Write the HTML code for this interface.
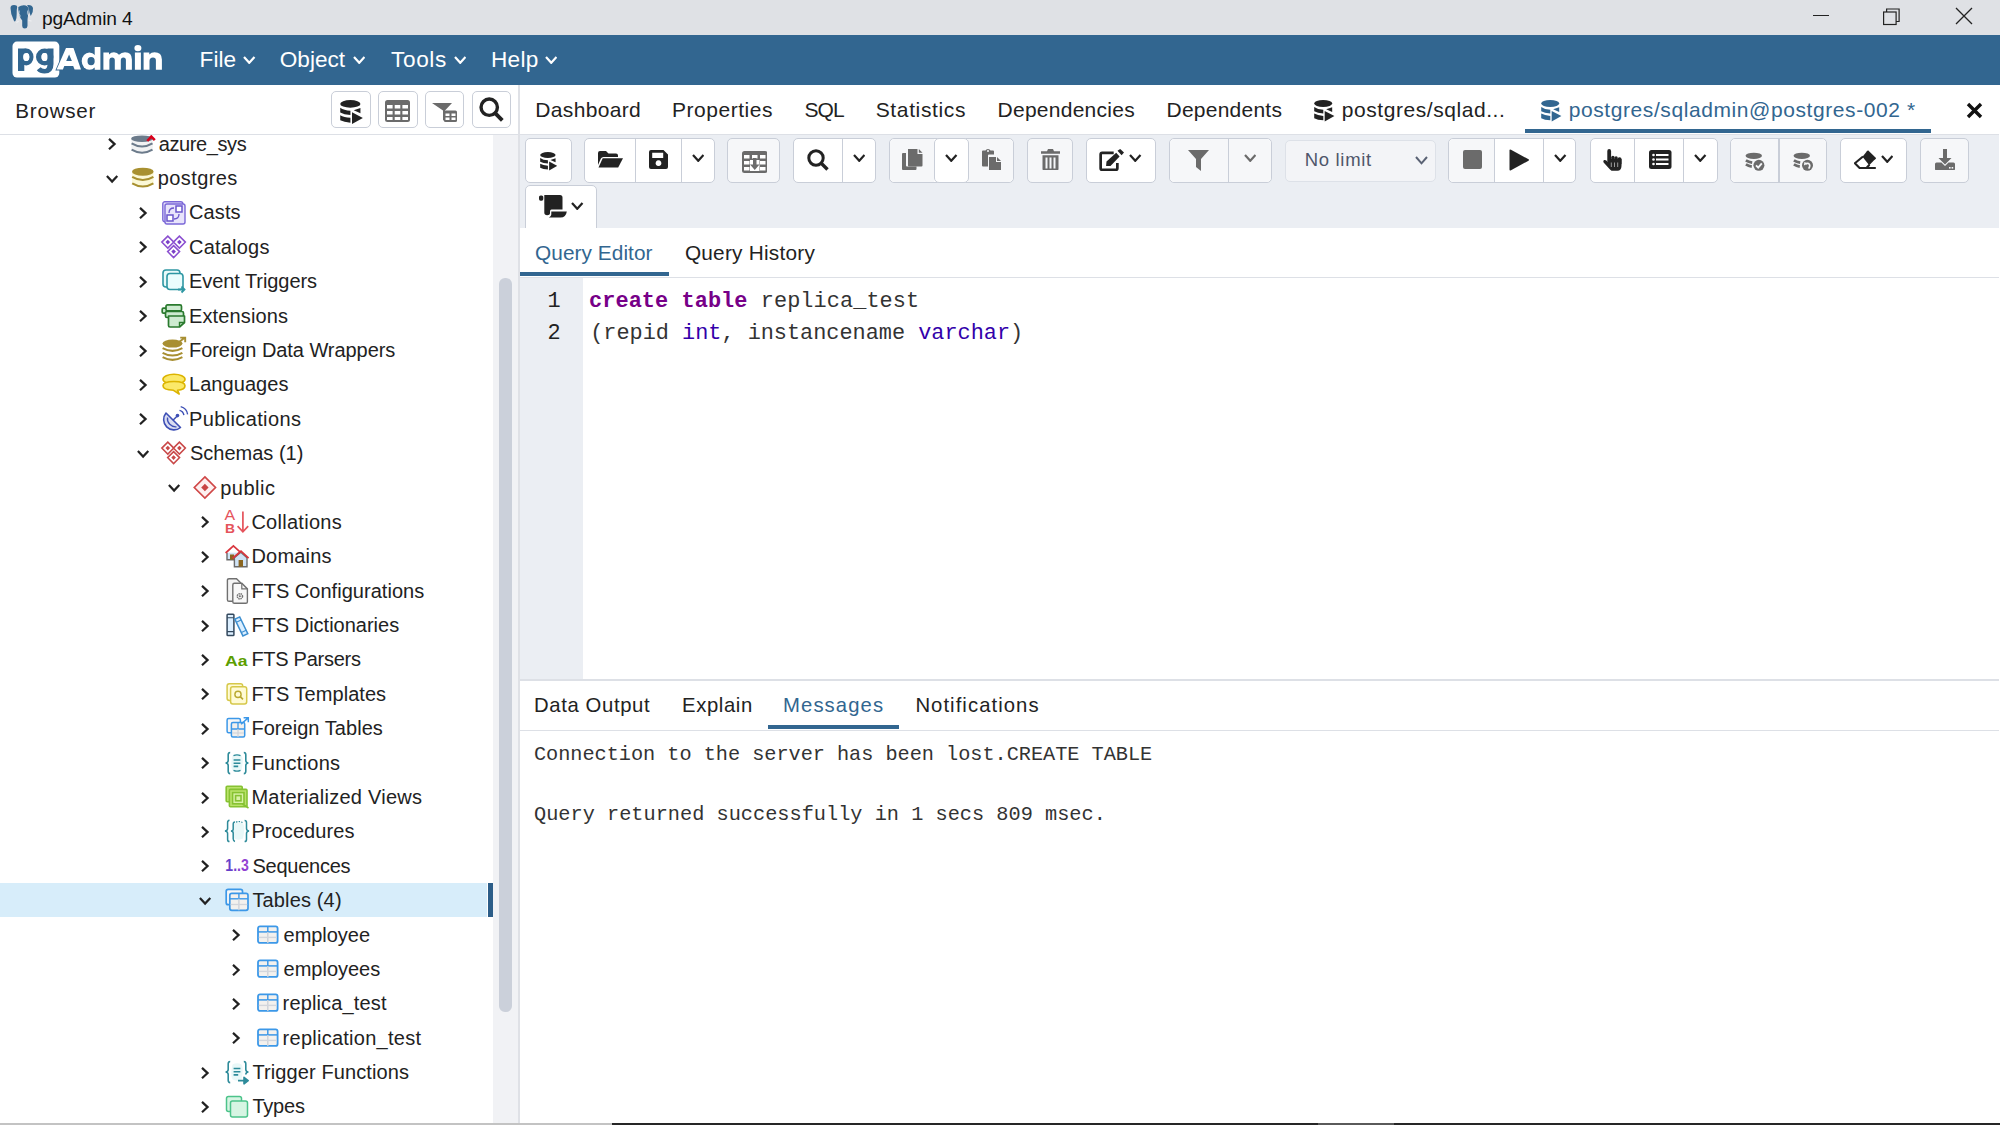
<!DOCTYPE html>
<html><head><meta charset="utf-8"><style>
*{margin:0;padding:0;box-sizing:border-box}
html,body{width:2000px;height:1125px;overflow:hidden;background:#fff;font-family:"Liberation Sans",sans-serif;color:#222}
.abs{position:absolute}
.tt{position:absolute;font-size:20px;line-height:34.386px;height:34.386px;white-space:nowrap;color:#222}
.menu{top:35px;height:50px;line-height:51px;font-size:22.5px;color:#fff;white-space:nowrap}
.btn{border:1.4px solid #c9ced8;border-radius:5px}
.tab{top:85px;height:49px;line-height:50px;font-size:21.2px;color:#222;white-space:nowrap}
.tab2{height:46px;line-height:46px;font-size:21px;color:#222;white-space:nowrap}
.code{font-family:"Liberation Mono",monospace;font-size:21.9px;line-height:32px;color:#222;white-space:pre}
.kw{color:#770088;font-weight:bold}
.ty{color:#3300aa}
.msg{font-family:"Liberation Mono",monospace;font-size:20.25px;line-height:30px;color:#222;white-space:pre}
</style></head><body>
<div class="abs" style="left:0;top:0;width:2000px;height:35px;background:#dfe1e5"></div>
<svg class="abs" style="left:10px;top:4px" width="24" height="25" viewBox="0 0 24 25"><path fill="#336791" d="M0.5 4 Q0.5 1 4 1 Q7.2 1 7.2 3 Q6.5 6 6.7 10 Q6.8 14 5.5 17 Q4.5 18 3.8 16.5 Q0.5 10 0.5 4z"/><path fill="#336791" d="M8.3 3 Q11 1.2 14 1.3 Q17.8 1.5 18.6 4.5 Q18.8 8 18 12 Q17.6 14 17.5 16 V22 Q17.3 24.5 14.8 24.5 Q12.3 24.5 12.2 22 V16.5 Q10 14 9 10 Q8 6 8.3 3z"/><path fill="#336791" d="M17 1.2 Q22 0.5 23 4 Q23.5 8 20.8 12 Q19.3 9 19 6 Q18.8 3 17 1.2z"/><path d="M9.3 6.5 Q8.3 9.5 10.5 12.5 M17.7 6.5 Q16.6 9.5 18.6 11.8 M8.5 17 Q7.8 18.3 6.5 18.6 M18.5 16.3 Q20 17 21.5 17" stroke="#fff" stroke-width="0.7" fill="none" opacity="0.8"/></svg>
<div class="abs" style="left:42.00px;top:3.85px;font-family:'Liberation Sans';font-size:19.2px;line-height:29px;font-weight:400;letter-spacing:-0.132px;color:#111;white-space:pre;">pgAdmin 4</div>
<div class="abs" style="left:1813px;top:14.5px;width:16px;height:1.3px;background:#222"></div>
<svg class="abs" style="left:1883px;top:8px" width="18" height="18" viewBox="0 0 18 18" preserveAspectRatio="none"><rect x="0.6" y="4" width="12.5" height="12.5" fill="none" stroke="#222" stroke-width="1.2"/><path d="M3.6 4 v-3 h12.5 v12.5 h-3" fill="none" stroke="#222" stroke-width="1.2"/></svg>
<svg class="abs" style="left:1955px;top:7px" width="18" height="18" viewBox="0 0 18 18" preserveAspectRatio="none"><path d="M1 1 L17 17 M17 1 L1 17" stroke="#222" stroke-width="1.3"/></svg>
<div class="abs" style="left:0;top:35px;width:2000px;height:50px;background:#326690"></div>
<svg class="abs" style="left:0;top:0" width="170" height="85" viewBox="0 0 170 85"><rect x="12.5" y="41.6" width="46.8" height="36" rx="4.5" fill="#fff"/><path fill="#326690" d="M18 48.5 H26.2 V57 H18z M18 48.5 h6.3 v22.5 h-6.3z"/><path fill="#326690" fill-rule="evenodd" d="M18.90 57.00 a7.3 8.5 0 1 0 14.60 0 a7.3 8.5 0 1 0 -14.60 0z M23.10 57.00 a3.1 4 0 1 0 6.20 0 a3.1 4 0 1 0 -6.20 0z"/><path fill="#fff" d="M23.10 57.00 a3.1 4 0 1 0 6.20 0 a3.1 4 0 1 0 -6.20 0z"/><path fill="#326690" fill-rule="evenodd" d="M36.00 57.00 a8.7 8.5 0 1 0 17.40 0 a8.7 8.5 0 1 0 -17.40 0z M41.50 57.00 a3.1 4 0 1 0 6.20 0 a3.1 4 0 1 0 -6.20 0z"/><path fill="#fff" d="M41.50 57.00 a3.1 4 0 1 0 6.20 0 a3.1 4 0 1 0 -6.20 0z"/><path fill="#326690" d="M47.5 48.5 H53.5 V64 Q53.5 73.5 44.5 73.5 Q39.5 73.5 36.8 70.2 L40.6 67.3 Q42 69 44.5 69 Q47.5 69 47.5 64z"/><path fill="#fff" stroke="#326690" stroke-width="1.6" paint-order="stroke" fill-rule="evenodd" d="M56.6 69.6 L66 47.9 H73.5 L81 69.6 H74.6 L73.2 65.9 H64.3 L62.9 69.6z M66.2 61.1 H71.9 L69.1 54.6z"/><path fill="#fff" d="M81.70 61.10 a7.7 8.7 0 1 0 15.40 0 a7.7 8.7 0 1 0 -15.40 0z"/><path fill="#fff" d="M94.7 47 H100.4 V69.8 H94.7z"/><path fill="#326690" d="M87.50 61.20 a3.6 4.1 0 1 0 7.20 0 a3.6 4.1 0 1 0 -7.20 0z"/><path fill="#fff" d="M103.4 69.8 V52.6 H109 V54.5 Q111 52.2 114 52.2 Q117.3 52.2 119 54.8 Q121.3 52.2 125 52.2 Q131.9 52.2 131.9 59.5 V69.8 H125.9 V60 Q125.9 57.5 123.4 57.5 Q120.8 57.5 120.8 60.5 V69.8 H114.8 V60 Q114.8 57.5 112.1 57.5 Q109.4 57.5 109.4 60.5 V69.8z"/><path fill="#fff" d="M134.40 48.10 a3.5 3.2 0 1 0 7.00 0 a3.5 3.2 0 1 0 -7.00 0z M134.9 52.6 H140.9 V69.8 H134.9z"/><path fill="#fff" d="M143.6 69.8 V52.6 H149.3 V54.6 Q151.3 52.2 154.5 52.2 Q161.9 52.2 161.9 59.5 V69.8 H155.9 V60.2 Q155.9 57.5 153 57.5 Q149.5 57.5 149.5 61 V69.8z"/></svg>
<div class="abs" style="left:199.50px;top:42.87px;font-family:'Liberation Sans';font-size:22.6px;line-height:34px;font-weight:400;letter-spacing:0.087px;color:#fff;white-space:pre;">File</div>
<svg class="abs" style="left:243px;top:55.5px" width="12.5" height="8" viewBox="0 0 12.5 8"><path d="M1 1 L6.25 6.8 L11.5 1" fill="none" stroke="#fff" stroke-width="2.2"/></svg>
<div class="abs" style="left:279.80px;top:42.87px;font-family:'Liberation Sans';font-size:22.6px;line-height:34px;font-weight:400;letter-spacing:-0.004px;color:#fff;white-space:pre;">Object</div>
<svg class="abs" style="left:352.5px;top:55.5px" width="12.5" height="8" viewBox="0 0 12.5 8"><path d="M1 1 L6.25 6.8 L11.5 1" fill="none" stroke="#fff" stroke-width="2.2"/></svg>
<div class="abs" style="left:391.00px;top:42.87px;font-family:'Liberation Sans';font-size:22.6px;line-height:34px;font-weight:400;letter-spacing:0.638px;color:#fff;white-space:pre;">Tools</div>
<svg class="abs" style="left:453.5px;top:55.5px" width="12.5" height="8" viewBox="0 0 12.5 8"><path d="M1 1 L6.25 6.8 L11.5 1" fill="none" stroke="#fff" stroke-width="2.2"/></svg>
<div class="abs" style="left:491.00px;top:42.87px;font-family:'Liberation Sans';font-size:22.6px;line-height:34px;font-weight:400;letter-spacing:0.266px;color:#fff;white-space:pre;">Help</div>
<svg class="abs" style="left:544.5px;top:55.5px" width="12.5" height="8" viewBox="0 0 12.5 8"><path d="M1 1 L6.25 6.8 L11.5 1" fill="none" stroke="#fff" stroke-width="2.2"/></svg>
<div class="abs" style="left:15.30px;top:94.86px;font-family:'Liberation Sans';font-size:20.6px;line-height:31px;font-weight:400;letter-spacing:0.772px;color:#222;white-space:pre;">Browser</div>
<div class="abs btn" style="left:330.5px;top:91px;width:40.0px;height:36.5px;background:#fff"></div>
<div class="abs btn" style="left:377.5px;top:91px;width:40.0px;height:36.5px;background:#fff"></div>
<div class="abs btn" style="left:424.5px;top:91px;width:39.5px;height:36.5px;background:#fff"></div>
<div class="abs btn" style="left:471.5px;top:91px;width:39.5px;height:36.5px;background:#fff"></div>
<svg class="abs" style="left:339.5px;top:100px" width="23" height="24" viewBox="0 0 20.5 21.5" preserveAspectRatio="none"><g fill="#222"><ellipse cx="9.2" cy="3.5" rx="9" ry="3.4"/>
<path d="M0.2 6.9 Q3.5 9.3 9.3 9.7 V13.5 Q3.5 13.2 0.2 11.3z"/>
<path d="M0.2 13.6 Q3.5 15.6 9.3 15.9 V20.3 Q3.5 20 0.2 18.2z"/>
<path d="M12.2 9.2 L18.2 7.2 V11.9z"/>
<path d="M10.7 10.9 L20.4 16.1 L10.7 21.4z"/></g></svg>
<svg class="abs" style="left:385px;top:100px" width="25" height="22" viewBox="0 0 25 22" preserveAspectRatio="none"><rect x="0" y="0" width="25" height="22" rx="2.5" fill="#6b6b6b"/><g fill="#fff"><rect x="2" y="5" width="5.6" height="3.5"/><rect x="9.7" y="5" width="5.6" height="3.5"/><rect x="17.4" y="5" width="5.6" height="3.5"/><rect x="2" y="11" width="5.6" height="3.5"/><rect x="9.7" y="11" width="5.6" height="3.5"/><rect x="17.4" y="11" width="5.6" height="3.5"/><rect x="2" y="17" width="5.6" height="3"/><rect x="9.7" y="17" width="5.6" height="3"/><rect x="17.4" y="17" width="5.6" height="3"/></g></svg>
<svg class="abs" style="left:432px;top:103px" width="25" height="19" viewBox="0 0 25 19" preserveAspectRatio="none"><path d="M0 0 h20 l-7 7.5 v11 l-2 -1.5 v-9.5z" fill="#6b6b6b"/><rect x="12" y="7.5" width="13" height="11.5" rx="1.5" fill="#6b6b6b"/><g fill="#fff"><rect x="13.5" y="10.5" width="4" height="2.5"/><rect x="19.5" y="10.5" width="4" height="2.5"/><rect x="13.5" y="14.5" width="4" height="2.5"/><rect x="19.5" y="14.5" width="4" height="2.5"/></g></svg>
<svg class="abs" style="left:479px;top:97px" width="25" height="25" viewBox="0 0 22 22" preserveAspectRatio="none"><circle cx="9" cy="9" r="7.2" fill="none" stroke="#222" stroke-width="3"/><path d="M14 14 L20.5 20.5" stroke="#222" stroke-width="3.4" stroke-linecap="butt"/></svg>
<div class="abs" style="left:535.30px;top:94.22px;font-family:'Liberation Sans';font-size:21px;line-height:32px;font-weight:400;letter-spacing:0.331px;color:#222;white-space:pre;">Dashboard</div>
<div class="abs" style="left:672.00px;top:94.22px;font-family:'Liberation Sans';font-size:21px;line-height:32px;font-weight:400;letter-spacing:0.532px;color:#222;white-space:pre;">Properties</div>
<div class="abs" style="left:804.40px;top:94.22px;font-family:'Liberation Sans';font-size:21px;line-height:32px;font-weight:400;letter-spacing:-0.871px;color:#222;white-space:pre;">SQL</div>
<div class="abs" style="left:875.70px;top:94.22px;font-family:'Liberation Sans';font-size:21px;line-height:32px;font-weight:400;letter-spacing:0.642px;color:#222;white-space:pre;">Statistics</div>
<div class="abs" style="left:997.50px;top:94.22px;font-family:'Liberation Sans';font-size:21px;line-height:32px;font-weight:400;letter-spacing:0.267px;color:#222;white-space:pre;">Dependencies</div>
<div class="abs" style="left:1166.50px;top:94.22px;font-family:'Liberation Sans';font-size:21px;line-height:32px;font-weight:400;letter-spacing:0.238px;color:#222;white-space:pre;">Dependents</div>
<svg class="abs" style="left:1314.4px;top:100.3px" width="20.5" height="21.5" viewBox="0 0 20.5 21.5" preserveAspectRatio="none"><g fill="#222"><ellipse cx="9.2" cy="3.5" rx="9" ry="3.4"/>
<path d="M0.2 6.9 Q3.5 9.3 9.3 9.7 V13.5 Q3.5 13.2 0.2 11.3z"/>
<path d="M0.2 13.6 Q3.5 15.6 9.3 15.9 V20.3 Q3.5 20 0.2 18.2z"/>
<path d="M12.2 9.2 L18.2 7.2 V11.9z"/>
<path d="M10.7 10.9 L20.4 16.1 L10.7 21.4z"/></g></svg>
<div class="abs" style="left:1341.70px;top:94.22px;font-family:'Liberation Sans';font-size:21px;line-height:32px;font-weight:400;letter-spacing:0.566px;color:#222;white-space:pre;">postgres/sqlad...</div>
<svg class="abs" style="left:1541px;top:100.3px" width="20.5" height="21.5" viewBox="0 0 20.5 21.5" preserveAspectRatio="none"><g fill="#326690"><ellipse cx="9.2" cy="3.5" rx="9" ry="3.4"/>
<path d="M0.2 6.9 Q3.5 9.3 9.3 9.7 V13.5 Q3.5 13.2 0.2 11.3z"/>
<path d="M0.2 13.6 Q3.5 15.6 9.3 15.9 V20.3 Q3.5 20 0.2 18.2z"/>
<path d="M12.2 9.2 L18.2 7.2 V11.9z"/>
<path d="M10.7 10.9 L20.4 16.1 L10.7 21.4z"/></g></svg>
<div class="abs" style="left:1568.70px;top:94.22px;font-family:'Liberation Sans';font-size:21px;line-height:32px;font-weight:400;letter-spacing:0.586px;color:#326690;white-space:pre;">postgres/sqladmin@postgres-002 *</div>
<div class="abs" style="left:1525px;top:129px;width:406px;height:4px;background:#326690"></div>
<svg class="abs" style="left:1966px;top:102px" width="17" height="17" viewBox="0 0 17 17" preserveAspectRatio="none"><path d="M2 2 L15 15 M15 2 L2 15" stroke="#111" stroke-width="3.4"/></svg>
<div class="abs" style="left:520px;top:134px;width:1479px;height:1px;background:#dde0e6"></div>
<div class="abs" style="left:520px;top:135px;width:1479px;height:93px;background:#ebeef3"></div>
<div class="abs btn" style="left:525.4px;top:137.8px;width:46.30000000000007px;height:45.19999999999999px;background:#fff;"></div>
<svg class="abs" style="left:539.5px;top:152px" width="17.5" height="18.5" viewBox="0 0 20.5 21.5" preserveAspectRatio="none"><g fill="#222"><ellipse cx="9.2" cy="3.5" rx="9" ry="3.4"/>
<path d="M0.2 6.9 Q3.5 9.3 9.3 9.7 V13.5 Q3.5 13.2 0.2 11.3z"/>
<path d="M0.2 13.6 Q3.5 15.6 9.3 15.9 V20.3 Q3.5 20 0.2 18.2z"/>
<path d="M12.2 9.2 L18.2 7.2 V11.9z"/>
<path d="M10.7 10.9 L20.4 16.1 L10.7 21.4z"/></g></svg>
<div class="abs btn" style="left:584.4px;top:137.8px;width:130.89999999999998px;height:45.19999999999999px;background:#fff"></div><div class="abs" style="left:635.2px;top:137.8px;width:1.3px;height:45.19999999999999px;background:#c9ced8"></div><div class="abs" style="left:681.1px;top:137.8px;width:1.3px;height:45.19999999999999px;background:#c9ced8"></div>
<svg class="abs" style="left:597.5px;top:151px" width="25" height="17" viewBox="0 0 25 17" preserveAspectRatio="none"><g fill="#222"><path d="M0 2 q0 -2 2 -2 h6 l2.5 2.5 h7.5 q2 0 2 2 v1.5 h-14.5 q-1.8 0 -2.6 1.6 l-2.9 6.5z"/><path d="M4.7 7.3 h20.3 l-4.8 9.2 h-19.7z"/></g></svg>
<svg class="abs" style="left:649px;top:150px" width="19" height="19" viewBox="0 0 19 19" preserveAspectRatio="none"><path fill="#222" fill-rule="evenodd" d="M2 0 h12.5 l4.5 4.5 v12.5 q0 2 -2 2 h-15 q-2 0 -2 -2 v-15 q0 -2 2 -2z M3.2 2.8 v5.2 h11 v-5.2z M9.5 10.3 a2.9 2.9 0 1 0 0.01 0z"/></svg>
<svg class="abs" style="left:691.5px;top:154px" width="12.5" height="8" viewBox="0 0 12.5 8"><path d="M1 1 L6.25 6.8 L11.5 1" fill="none" stroke="#222" stroke-width="2.2"/></svg>
<div class="abs btn" style="left:727.3px;top:137.8px;width:53.10000000000002px;height:45.19999999999999px;background:#f6f7f9;"></div>
<svg class="abs" style="left:741.5px;top:151px" width="25.5" height="22" viewBox="0 0 25.5 22" preserveAspectRatio="none"><rect x="0" y="0" width="25.5" height="22" rx="2.5" fill="#6b6b6b"/>
<g fill="#fff"><rect x="2" y="4" width="5.5" height="3.5"/><rect x="10" y="4" width="5.5" height="3.5"/><rect x="18" y="4" width="5.5" height="3.5"/>
<rect x="2" y="10" width="5.5" height="3.5"/><rect x="18" y="10" width="5.5" height="3.5"/>
<rect x="2" y="16" width="5.5" height="3.5"/><rect x="18" y="16" width="5.5" height="3.5"/><rect x="8" y="9" width="9.5" height="11"/></g>
<path d="M11 7 h3.5 v6.5 h3 l-4.75 5.5 l-4.75 -5.5 h3z" fill="#6b6b6b"/></svg>
<div class="abs btn" style="left:793.2px;top:137.8px;width:83.19999999999993px;height:45.19999999999999px;background:#fff"></div><div class="abs" style="left:841.7px;top:137.8px;width:1.3px;height:45.19999999999999px;background:#c9ced8"></div>
<svg class="abs" style="left:807px;top:148.5px" width="22" height="22" viewBox="0 0 22 22" preserveAspectRatio="none"><circle cx="9" cy="9" r="7.2" fill="none" stroke="#222" stroke-width="3"/><path d="M14 14 L20.5 20.5" stroke="#222" stroke-width="3.4" stroke-linecap="butt"/></svg>
<svg class="abs" style="left:852.5px;top:154px" width="12.5" height="8" viewBox="0 0 12.5 8"><path d="M1 1 L6.25 6.8 L11.5 1" fill="none" stroke="#222" stroke-width="2.2"/></svg>
<div class="abs btn" style="left:888.6px;top:137.8px;width:125.69999999999993px;height:45.19999999999999px;background:#fff"></div><div class="abs" style="left:889.6px;top:139.10000000000002px;width:44.69999999999993px;height:42.59999999999999px;background:#f6f7f9;border-radius:5px 0 0 5px"></div><div class="abs" style="left:968.2px;top:139.10000000000002px;width:45.09999999999991px;height:42.59999999999999px;background:#f6f7f9;border-radius:0 5px 5px 0"></div>
<div class="abs btn" style="left:934px;top:137.8px;width:34.5px;height:45.2px;background:#fff"></div>
<svg class="abs" style="left:902px;top:148.5px" width="20.5" height="21.5" viewBox="0 0 20.5 21.5" preserveAspectRatio="none"><g fill="#6b6b6b"><path d="M0 5 q0 -1 1 -1 h3 v12.5 q0 1 1 1 h9.5 v2.5 q0 1 -1 1 h-12.5 q-1 0 -1 -1z"/><path d="M6 0 h9.5 v5 h5 v11.5 q0 1 -1 1 h-12.5 q-1 0 -1 -1z"/><path d="M16.8 0 l3.7 3.7 h-3.7z"/></g></svg>
<svg class="abs" style="left:945px;top:154px" width="12.5" height="8" viewBox="0 0 12.5 8"><path d="M1 1 L6.25 6.8 L11.5 1" fill="none" stroke="#222" stroke-width="2.2"/></svg>
<svg class="abs" style="left:981.5px;top:148.5px" width="19" height="21.5" viewBox="0 0 19 21.5" preserveAspectRatio="none"><g fill="#6b6b6b"><path d="M0 2.5 q0 -1 1 -1 h2.5 q0.5 -1.5 2.5 -1.5 q2 0 2.5 1.5 h2.5 q1 0 1 1 v3 h-5 q-1 0 -1 1 v11 h-5 q-1 0 -1 -1z"/><path d="M7 8 h7 v5 h5 v8.5 h-12z"/><path d="M15 8 l4 4 h-4z"/></g><circle cx="6" cy="2" r="1" fill="#f6f7f9"/></svg>
<div class="abs btn" style="left:1026.6px;top:137.8px;width:46.700000000000045px;height:45.19999999999999px;background:#f6f7f9;"></div>
<svg class="abs" style="left:1040.5px;top:148.5px" width="19" height="21.5" viewBox="0 0 19 21.5" preserveAspectRatio="none"><g fill="#6b6b6b"><path d="M0 2.3 h6 l1 -2.3 h5 l1 2.3 h6 v2.5 h-19z"/><path d="M1.5 6.3 h16 v13.5 q0 1.7 -1.7 1.7 h-12.6 q-1.7 0 -1.7 -1.7z"/></g><g fill="#f6f7f9"><rect x="4.5" y="8.5" width="2" height="11"/><rect x="8.5" y="8.5" width="2" height="11"/><rect x="12.5" y="8.5" width="2" height="11"/></g></svg>
<div class="abs btn" style="left:1085.6px;top:137.8px;width:70.10000000000014px;height:45.19999999999999px;background:#fff;"></div>
<svg class="abs" style="left:1099px;top:148.5px" width="25.5" height="23" viewBox="0 0 25.5 23" preserveAspectRatio="none"><path d="M14.7 3.85 H3.2 q-1.55 0 -1.55 1.55 v13.8 q0 1.55 1.55 1.55 h13.6 q1.55 0 1.55 -1.55 v-5.3" fill="none" stroke="#222" stroke-width="2.7"/><path d="M7.5 12.5 L17.2 3.7 L20.6 7.6 L11.5 17.1 L7.1 17.1z" fill="#222"/><path d="M18.5 1.8 L21.2 0.1 L25 3.6 L22.6 6.2z" fill="#222"/></svg>
<svg class="abs" style="left:1129px;top:154px" width="12.5" height="8" viewBox="0 0 12.5 8"><path d="M1 1 L6.25 6.8 L11.5 1" fill="none" stroke="#222" stroke-width="2.2"/></svg>
<div class="abs btn" style="left:1168.6px;top:137.8px;width:103.60000000000014px;height:45.19999999999999px;background:#fff"></div><div class="abs" style="left:1169.6px;top:139.10000000000002px;width:101.60000000000014px;height:42.59999999999999px;background:#f6f7f9;border-radius:5px 5px 5px 5px"></div><div class="abs" style="left:1228.0px;top:137.8px;width:1.3px;height:45.19999999999999px;background:#c9ced8"></div>
<svg class="abs" style="left:1188px;top:149.5px" width="21" height="21" viewBox="0 0 21 21" preserveAspectRatio="none"><path d="M0 0 h21 l-8 9 v12 l-5 -4 v-8z" fill="#6b6b6b"/></svg>
<svg class="abs" style="left:1243.5px;top:154px" width="12.5" height="8" viewBox="0 0 12.5 8"><path d="M1 1 L6.25 6.8 L11.5 1" fill="none" stroke="#6b6b6b" stroke-width="2.2"/></svg>
<div class="abs" style="left:1284.6px;top:139.5px;width:151.2px;height:42.25px;background:#f3f4f7;border:1.3px solid #dde1e8;border-radius:5px"></div>
<div class="abs" style="left:1304.75px;top:146.19px;font-family:'Liberation Sans';font-size:18.5px;line-height:28px;font-weight:400;letter-spacing:0.674px;color:#4f566b;white-space:pre;">No limit</div>
<svg class="abs" style="left:1415px;top:156px" width="13" height="8.5" viewBox="0 0 13 8.5"><path d="M1 1 L6.5 7.3 L12 1" fill="none" stroke="#5a6274" stroke-width="2"/></svg>
<div class="abs btn" style="left:1448.4px;top:137.8px;width:128.0999999999999px;height:45.19999999999999px;background:#fff"></div><div class="abs" style="left:1449.4px;top:139.10000000000002px;width:44.899999999999864px;height:42.59999999999999px;background:#f6f7f9;border-radius:5px 0 0 5px"></div><div class="abs" style="left:1493.8px;top:137.8px;width:1.3px;height:45.19999999999999px;background:#c9ced8"></div><div class="abs" style="left:1542.9px;top:137.8px;width:1.3px;height:45.19999999999999px;background:#c9ced8"></div>
<svg class="abs" style="left:1462.5px;top:149.8px" width="19" height="19" viewBox="0 0 19 19" preserveAspectRatio="none"><rect x="0" y="0" width="19" height="19" rx="2" fill="#6b6b6b"/></svg>
<svg class="abs" style="left:1509px;top:148.7px" width="20" height="22" viewBox="0 0 20 22" preserveAspectRatio="none"><path d="M0.5 1.5 q0 -1.5 1.5 -0.7 l17.5 9.5 q1 0.7 0 1.4 l-17.5 9.5 q-1.5 0.8 -1.5 -0.7z" fill="#222"/></svg>
<svg class="abs" style="left:1554px;top:154px" width="12.5" height="8" viewBox="0 0 12.5 8"><path d="M1 1 L6.25 6.8 L11.5 1" fill="none" stroke="#222" stroke-width="2.2"/></svg>
<div class="abs btn" style="left:1589.5px;top:137.8px;width:128.70000000000005px;height:45.19999999999999px;background:#fff"></div><div class="abs" style="left:1634.0px;top:137.8px;width:1.3px;height:45.19999999999999px;background:#c9ced8"></div><div class="abs" style="left:1682.9px;top:137.8px;width:1.3px;height:45.19999999999999px;background:#c9ced8"></div>
<svg class="abs" style="left:1603px;top:148.5px" width="19.5" height="22" viewBox="0 0 19.5 22" preserveAspectRatio="none"><g fill="#222"><rect x="4.3" y="0" width="3.8" height="14" rx="1.9"/><rect x="8.2" y="6.8" width="3.4" height="8" rx="1.7"/><rect x="11.4" y="7.3" width="3.4" height="8" rx="1.7"/><rect x="14.6" y="8.2" width="3.9" height="8" rx="1.9"/><path d="M5 10 H18.5 V17 Q18.3 21.7 14.5 21.7 H8.5 L7 20.5 L0.6 13.5 Q-0.2 11.6 1.3 11 Q2.3 10.6 3.3 11.5 L5 13z"/></g><g stroke="#fff" stroke-width="0.55"><path d="M8.3 13.5 v4.5M11.5 13.5 v4.5M14.7 13.5 v4.5"/></g></svg>
<svg class="abs" style="left:1649px;top:150px" width="22.5" height="19" viewBox="0 0 22.5 19" preserveAspectRatio="none"><rect x="0" y="0" width="22.5" height="19" rx="2.5" fill="#222"/><g fill="#fff"><circle cx="4.5" cy="5" r="1.3"/><circle cx="4.5" cy="9.5" r="1.3"/><circle cx="4.5" cy="14" r="1.3"/><rect x="7" y="4" width="12.5" height="2"/><rect x="7" y="8.5" width="12.5" height="2"/><rect x="7" y="13" width="12.5" height="2"/></g></svg>
<svg class="abs" style="left:1694px;top:154px" width="12.5" height="8" viewBox="0 0 12.5 8"><path d="M1 1 L6.25 6.8 L11.5 1" fill="none" stroke="#222" stroke-width="2.2"/></svg>
<div class="abs btn" style="left:1730.3px;top:137.8px;width:97.10000000000014px;height:45.19999999999999px;background:#fff"></div><div class="abs" style="left:1731.3px;top:139.10000000000002px;width:95.10000000000014px;height:42.59999999999999px;background:#f6f7f9;border-radius:5px 5px 5px 5px"></div><div class="abs" style="left:1778.4px;top:137.8px;width:1.3px;height:45.19999999999999px;background:#c9ced8"></div>
<svg class="abs" style="left:1745px;top:152px" width="22" height="21" viewBox="0 0 22 21" preserveAspectRatio="none"><ellipse cx="8.8" cy="3.8" rx="8.2" ry="3.1" fill="#6b6b6b"/><path d="M0.9 8.3 Q3.5 10 7.2 10.6 M0.9 12.4 Q3.5 14.1 6.8 14.6" fill="none" stroke="#6b6b6b" stroke-width="2.8"/><circle cx="13.9" cy="13.3" r="6.4" fill="#f6f7f9"/><circle cx="13.9" cy="13.3" r="5.5" fill="#6b6b6b"/><path d="M11.0 13.4 L13.200000000000001 15.6 L16.8 11.4" fill="none" stroke="#f6f7f9" stroke-width="1.9"/></svg>
<svg class="abs" style="left:1793px;top:152px" width="22" height="21" viewBox="0 0 22 21" preserveAspectRatio="none"><ellipse cx="8.8" cy="3.8" rx="8.2" ry="3.1" fill="#6b6b6b"/><path d="M0.9 8.3 Q3.5 10 7.2 10.6 M0.9 12.4 Q3.5 14.1 6.8 14.6" fill="none" stroke="#6b6b6b" stroke-width="2.8"/><circle cx="14.5" cy="13.3" r="6.4" fill="#f6f7f9"/><circle cx="14.5" cy="13.3" r="5.5" fill="#6b6b6b"/><path d="M15.7 16.6 Q17.9 13 15.5 11.6 Q13.9 10.8 12.5 12" fill="none" stroke="#f6f7f9" stroke-width="1.7"/><path d="M10.9 13.6 L11.4 10 L14.6 11.6z" fill="#f6f7f9"/></svg>
<div class="abs btn" style="left:1839.8px;top:137.8px;width:67.70000000000005px;height:45.19999999999999px;background:#fff;"></div>
<svg class="abs" style="left:1854px;top:149.5px" width="22" height="19.5" viewBox="0 0 22 19.5" preserveAspectRatio="none"><path d="M8.5 6.8 L13.3 0.8 L21.3 9 L15.2 15.2z" fill="#222"/><path d="M9 6.5 L0.9 13.2 L5.6 18 H21.8 M15.5 14.8 L12.8 17.6 M13.3 0.9 L21.4 9" fill="none" stroke="#222" stroke-width="2.1" stroke-linejoin="round"/></svg>
<svg class="abs" style="left:1880.6px;top:155.2px" width="12.5" height="8" viewBox="0 0 12.5 8"><path d="M1 1 L6.25 6.8 L11.5 1" fill="none" stroke="#222" stroke-width="2.2"/></svg>
<div class="abs btn" style="left:1920.2px;top:137.8px;width:49.299999999999955px;height:45.19999999999999px;background:#f6f7f9;"></div>
<svg class="abs" style="left:1934.5px;top:148.5px" width="20" height="21.5" viewBox="0 0 20 21.5" preserveAspectRatio="none"><g fill="#6b6b6b"><path d="M8 0 h4 v9 h4.5 l-6.5 6.5 l-6.5 -6.5 h4.5z"/><path d="M0 15 q0 -1.5 1.5 -1.5 h5 l3.5 3.5 l3.5 -3.5 h5 q1.5 0 1.5 1.5 v5 q0 1.5 -1.5 1.5 h-17 q-1.5 0 -1.5 -1.5z"/></g><g fill="#f6f7f9"><rect x="14" y="18" width="1.6" height="1.6"/><rect x="16.6" y="18" width="1.6" height="1.6"/></g></svg>
<div class="abs btn" style="left:525.4px;top:184.5px;width:72px;height:48px;background:#fff"></div>
<svg class="abs" style="left:538.9px;top:195.1px" width="28" height="23" viewBox="0 0 28 23" preserveAspectRatio="none"><g fill="#222"><rect x="0" y="0.4" width="4.3" height="5.3" rx="1.6"/><path d="M5.3 0 H21 Q23.5 0 23.5 2.5 V14.6 H12.5 Q11 14.6 11 16.5 V18.5 Q11 20.3 8.2 20.3 Q5.3 20.3 5.3 17.5z"/><path d="M12.3 16.4 H27.8 Q27 22.4 21.5 22.4 H9.8 Q12.6 21.3 12.3 18.3z"/></g></svg>
<svg class="abs" style="left:571.2px;top:202px" width="12.5" height="8" viewBox="0 0 12.5 8"><path d="M1 1 L6.25 6.8 L11.5 1" fill="none" stroke="#222" stroke-width="2.2"/></svg>
<div class="abs" style="left:520px;top:228px;width:1479px;height:10px;background:#fff"></div>
<div class="abs" style="left:535.00px;top:237.49px;font-family:'Liberation Sans';font-size:20.8px;line-height:31px;font-weight:400;letter-spacing:0.072px;color:#326690;white-space:pre;">Query Editor</div>
<div class="abs" style="left:684.90px;top:237.49px;font-family:'Liberation Sans';font-size:20.8px;line-height:31px;font-weight:400;letter-spacing:0.240px;color:#222;white-space:pre;">Query History</div>
<div class="abs" style="left:520px;top:272px;width:149px;height:4px;background:#326690"></div>
<div class="abs" style="left:520px;top:277px;width:1479px;height:1px;background:#dde0e6"></div>
<div class="abs" style="left:520px;top:278px;width:63px;height:401px;background:#ebeef3"></div>
<div class="abs" style="left:547.40px;top:285.26px;font-family:'Liberation Mono';font-size:21.9px;line-height:33px;font-weight:400;letter-spacing:0.000px;color:#222;white-space:pre;">1</div>
<div class="abs" style="left:547.40px;top:317.26px;font-family:'Liberation Mono';font-size:21.9px;line-height:33px;font-weight:400;letter-spacing:0.000px;color:#222;white-space:pre;">2</div>
<div class="abs" style="left:589.00px;top:285.46px;font-family:'Liberation Mono';font-size:21.9px;line-height:33px;font-weight:400;letter-spacing:0.072px;color:#333;white-space:pre;"><span class="kw">create</span> <span class="kw">table</span> replica_test</div>
<div class="abs" style="left:590.20px;top:317.46px;font-family:'Liberation Mono';font-size:21.9px;line-height:33px;font-weight:400;letter-spacing:-0.018px;color:#333;white-space:pre;">(repid <span class="ty">int</span>, instancename <span class="ty">varchar</span>)</div>
<div class="abs" style="left:520px;top:679px;width:1479px;height:2px;background:#dde0e6"></div>
<div class="abs" style="left:534.00px;top:690.47px;font-family:'Liberation Sans';font-size:20.3px;line-height:30px;font-weight:400;letter-spacing:0.628px;color:#222;white-space:pre;">Data Output</div>
<div class="abs" style="left:682.00px;top:690.47px;font-family:'Liberation Sans';font-size:20.3px;line-height:30px;font-weight:400;letter-spacing:0.627px;color:#222;white-space:pre;">Explain</div>
<div class="abs" style="left:783.00px;top:690.47px;font-family:'Liberation Sans';font-size:20.3px;line-height:30px;font-weight:400;letter-spacing:1.101px;color:#326690;white-space:pre;">Messages</div>
<div class="abs" style="left:915.40px;top:690.47px;font-family:'Liberation Sans';font-size:20.3px;line-height:30px;font-weight:400;letter-spacing:1.056px;color:#222;white-space:pre;">Notifications</div>
<div class="abs" style="left:768px;top:725px;width:131px;height:4px;background:#326690"></div>
<div class="abs" style="left:520px;top:730px;width:1479px;height:1px;background:#dde0e6"></div>
<div class="abs" style="left:534.00px;top:740.30px;font-family:'Liberation Mono';font-size:20.25px;line-height:30px;font-weight:400;letter-spacing:-0.032px;color:#333;white-space:pre;">Connection to the server has been lost.CREATE TABLE</div>
<div class="abs" style="left:534.00px;top:800.30px;font-family:'Liberation Mono';font-size:20.25px;line-height:30px;font-weight:400;letter-spacing:0.015px;color:#333;white-space:pre;">Query returned successfully in 1 secs 809 msec.</div>
<!-- browser tree -->
<div class="abs" style="left:0;top:134px;width:519px;height:1px;background:#dde0e6"></div>
<div class="abs" style="left:0;top:135px;width:519px;height:988px;overflow:hidden">
<div style="position:absolute;left:0;top:-135px;width:519px;height:1125px">
<svg style="position:absolute;left:106.5px;top:137.2px" width="10" height="14" viewBox="0 0 10 14"><path d="M2 1.9 L7.6 7.1 L2 12.3" fill="none" stroke="#222" stroke-width="2.2"/></svg><svg style="position:absolute;left:131.0px;top:131.7px;overflow:visible" width="24" height="24" viewBox="0 0 24 24"><path d="M0.3 6.7 V17.6 Q11 23.6 21.8 17.6 V6.7z" fill="#f1f2f3"/><ellipse cx="11" cy="6.7" rx="10.9" ry="3.3" fill="#6c7b8b"/><path d="M0.6 11.4 Q11 17.6 21.5 11.4 M0.6 17.6 Q11 23.8 21.5 17.6" fill="none" stroke="#6c7b8b" stroke-width="2.1"/><path d="M16.3 9 L20.3 4.6 L23.8 8.2" fill="none" stroke="#d9001b" stroke-width="2.6"/></svg><div class="abs" style="left:158.80px;top:128.67px;font-family:'Liberation Sans';font-size:20px;line-height:30px;font-weight:400;letter-spacing:-0.407px;color:#222;white-space:pre;">azure_sys</div>
<svg style="position:absolute;left:104.5px;top:173.6px" width="14" height="10" viewBox="0 0 14 10"><path d="M1.9 2 L7.1 7.6 L12.3 2" fill="none" stroke="#222" stroke-width="2.2"/></svg><svg style="position:absolute;left:131.0px;top:166.1px;overflow:visible" width="24" height="24" viewBox="0 0 24 24"><path d="M1 5.7 V17.4 Q11.8 23.5 22.6 17.4 V5.7z" fill="#fbf8d6"/><ellipse cx="11.8" cy="5.7" rx="10.8" ry="4" fill="#a89030"/><path d="M1.2 10.9 Q11.8 17.2 22.4 10.9 M1.2 17.4 Q11.8 23.7 22.4 17.4" fill="none" stroke="#a89030" stroke-width="2.1"/></svg><div class="abs" style="left:157.80px;top:163.06px;font-family:'Liberation Sans';font-size:20px;line-height:30px;font-weight:400;letter-spacing:0.399px;color:#222;white-space:pre;">postgres</div>
<svg style="position:absolute;left:137.7px;top:206.0px" width="10" height="14" viewBox="0 0 10 14"><path d="M2 1.9 L7.6 7.1 L2 12.3" fill="none" stroke="#222" stroke-width="2.2"/></svg><svg style="position:absolute;left:162.2px;top:200.5px;overflow:visible" width="24" height="24" viewBox="0 0 24 24"><rect x="0.8" y="0.8" width="20" height="20" rx="2" fill="#e6e2fa" stroke="#7b68d8" stroke-width="1.4"/><rect x="3" y="3" width="20" height="20" rx="2" fill="#e8e4fb" stroke="#7b68d8" stroke-width="1.4"/><rect x="14" y="5" width="6" height="6" fill="#fff" stroke="#6a55cc" stroke-width="1.5"/><rect x="5" y="14" width="6" height="6" fill="#fff" stroke="#6a55cc" stroke-width="1.5"/><path d="M7 12 q0 -5 5 -5 M12 18 q5 0 5 -5" fill="none" stroke="#6a55cc" stroke-width="1.3"/></svg><div class="abs" style="left:189.00px;top:197.44px;font-family:'Liberation Sans';font-size:20px;line-height:30px;font-weight:400;letter-spacing:0.119px;color:#222;white-space:pre;">Casts</div>
<svg style="position:absolute;left:137.7px;top:240.4px" width="10" height="14" viewBox="0 0 10 14"><path d="M2 1.9 L7.6 7.1 L2 12.3" fill="none" stroke="#222" stroke-width="2.2"/></svg><svg style="position:absolute;left:162.2px;top:234.9px;overflow:visible" width="24" height="24" viewBox="0 0 24 24"><path d="M5.8 1.0999999999999996 L11.8 7.1 L5.8 13.1 L-0.20000000000000018 7.1z" fill="#fff" stroke="#8b4fd0" stroke-width="1.5"/><path d="M5.8 4.8 L8.1 7.1 L5.8 9.399999999999999 L3.5 7.1z" fill="#7a3fc8"/><path d="M17.4 1.0999999999999996 L23.4 7.1 L17.4 13.1 L11.399999999999999 7.1z" fill="#fff" stroke="#8b4fd0" stroke-width="1.5"/><path d="M17.4 4.8 L19.7 7.1 L17.4 9.399999999999999 L15.099999999999998 7.1z" fill="#7a3fc8"/><path d="M11.6 10.600000000000001 L17.6 16.6 L11.6 22.6 L5.6 16.6z" fill="#fff" stroke="#8b4fd0" stroke-width="1.5"/><path d="M11.6 14.3 L13.899999999999999 16.6 L11.6 18.900000000000002 L9.3 16.6z" fill="#7a3fc8"/></svg><div class="abs" style="left:189.00px;top:231.83px;font-family:'Liberation Sans';font-size:20px;line-height:30px;font-weight:400;letter-spacing:0.209px;color:#222;white-space:pre;">Catalogs</div>
<svg style="position:absolute;left:137.7px;top:274.7px" width="10" height="14" viewBox="0 0 10 14"><path d="M2 1.9 L7.6 7.1 L2 12.3" fill="none" stroke="#222" stroke-width="2.2"/></svg><svg style="position:absolute;left:162.2px;top:269.2px;overflow:visible" width="24" height="24" viewBox="0 0 24 24"><rect x="1" y="1" width="17" height="17" rx="3" fill="#e8fafa" stroke="#2e97a3" stroke-width="1.6"/><rect x="5" y="4.5" width="16" height="16" rx="3" fill="#eafdfd" stroke="#2e97a3" stroke-width="1.6"/><path d="M16 20.5 h6 M19.5 17.5 l3 3 l-3 3" fill="none" stroke="#2e97a3" stroke-width="1.8"/></svg><div class="abs" style="left:189.00px;top:266.21px;font-family:'Liberation Sans';font-size:20px;line-height:30px;font-weight:400;letter-spacing:-0.070px;color:#222;white-space:pre;">Event Triggers</div>
<svg style="position:absolute;left:137.7px;top:309.1px" width="10" height="14" viewBox="0 0 10 14"><path d="M2 1.9 L7.6 7.1 L2 12.3" fill="none" stroke="#222" stroke-width="2.2"/></svg><svg style="position:absolute;left:162.2px;top:303.6px;overflow:visible" width="24" height="24" viewBox="0 0 24 24"><g fill="#cdebd0" stroke="#2a7a2e" stroke-width="1.7" stroke-linejoin="round"><rect x="0.2" y="4.2" width="14" height="5" rx="1.2"/><rect x="4" y="0.9" width="15.5" height="6" rx="1.5"/><rect x="3.5" y="7.5" width="18" height="6" rx="1.5"/><path d="M6.5 12 H22.5 V18.5 L17.5 23 H8 Q6.5 23 6.5 21.5z"/></g><path d="M17.5 23 V18.5 H22.5" fill="none" stroke="#2a7a2e" stroke-width="1.4"/></svg><div class="abs" style="left:189.00px;top:300.60px;font-family:'Liberation Sans';font-size:20px;line-height:30px;font-weight:400;letter-spacing:0.130px;color:#222;white-space:pre;">Extensions</div>
<svg style="position:absolute;left:137.7px;top:343.5px" width="10" height="14" viewBox="0 0 10 14"><path d="M2 1.9 L7.6 7.1 L2 12.3" fill="none" stroke="#222" stroke-width="2.2"/></svg><svg style="position:absolute;left:162.2px;top:338.0px;overflow:visible" width="24" height="24" viewBox="0 0 24 24"><ellipse cx="10.5" cy="5.6" rx="10" ry="4" fill="#a88f32"/><path d="M0.6 10.2 Q10.5 15.6 20.4 10.2 M0.6 14.8 Q10.5 20.2 20.4 14.8 M0.6 19.2 Q10.5 24.6 20.4 19.2" stroke="#a88f32" stroke-width="2.1" fill="none"/><path d="M16.5 4.5 L22.6 -0.2 M18.2 -0.4 H23.2 V4.2" stroke="#a88f32" stroke-width="1.9" fill="none"/></svg><div class="abs" style="left:189.00px;top:334.99px;font-family:'Liberation Sans';font-size:20px;line-height:30px;font-weight:400;letter-spacing:-0.060px;color:#222;white-space:pre;">Foreign Data Wrappers</div>
<svg style="position:absolute;left:137.7px;top:377.9px" width="10" height="14" viewBox="0 0 10 14"><path d="M2 1.9 L7.6 7.1 L2 12.3" fill="none" stroke="#222" stroke-width="2.2"/></svg><svg style="position:absolute;left:162.2px;top:372.4px;overflow:visible" width="24" height="24" viewBox="0 0 24 24"><ellipse cx="12" cy="7.2" rx="11" ry="5" fill="#fbe96a" stroke="#dcb400" stroke-width="1.6"/><path d="M1 13.8 Q1 9.5 12 9.5 Q23 9.5 23 13.8 Q23 17.8 15.5 18.2 L17.2 22 L11.5 18.3 Q1 18 1 13.8z" fill="#fbe96a" stroke="#dcb400" stroke-width="1.6" stroke-linejoin="round"/></svg><div class="abs" style="left:189.00px;top:369.37px;font-family:'Liberation Sans';font-size:20px;line-height:30px;font-weight:400;letter-spacing:0.064px;color:#222;white-space:pre;">Languages</div>
<svg style="position:absolute;left:137.7px;top:412.3px" width="10" height="14" viewBox="0 0 10 14"><path d="M2 1.9 L7.6 7.1 L2 12.3" fill="none" stroke="#222" stroke-width="2.2"/></svg><svg style="position:absolute;left:162.2px;top:406.8px;overflow:visible" width="24" height="24" viewBox="0 0 24 24"><path d="M4 6 L18.5 20.5 A10.3 10.3 0 0 1 4 6z" fill="#d9dcf2" stroke="#3d4fb5" stroke-width="1.6" stroke-linejoin="round"/><path d="M5.5 10.5 A8.3 8.3 0 0 0 14.5 19.8" fill="none" stroke="#3d4fb5" stroke-width="1.3"/><path d="M11 13.2 L15.2 9" stroke="#3d4fb5" stroke-width="1.5"/><circle cx="15.5" cy="8.6" r="1.8" fill="#3d4fb5"/><path d="M17.5 3.4 Q21.3 4.3 21.9 8.2 M18.7 -0.4 Q24.8 1.2 25.6 7.3" stroke="#3d4fb5" stroke-width="1.4" fill="none"/></svg><div class="abs" style="left:189.00px;top:403.76px;font-family:'Liberation Sans';font-size:20px;line-height:30px;font-weight:400;letter-spacing:0.369px;color:#222;white-space:pre;">Publications</div>
<svg style="position:absolute;left:135.7px;top:448.7px" width="14" height="10" viewBox="0 0 14 10"><path d="M1.9 2 L7.1 7.6 L12.3 2" fill="none" stroke="#222" stroke-width="2.2"/></svg><svg style="position:absolute;left:162.2px;top:441.2px;overflow:visible" width="24" height="24" viewBox="0 0 24 24"><path d="M5.8 1.0999999999999996 L11.8 7.1 L5.8 13.1 L-0.20000000000000018 7.1z" fill="#fff" stroke="#c94848" stroke-width="1.5"/><path d="M5.8 4.8 L8.1 7.1 L5.8 9.399999999999999 L3.5 7.1z" fill="#c94848"/><path d="M17.4 1.0999999999999996 L23.4 7.1 L17.4 13.1 L11.399999999999999 7.1z" fill="#fff" stroke="#c94848" stroke-width="1.5"/><path d="M17.4 4.8 L19.7 7.1 L17.4 9.399999999999999 L15.099999999999998 7.1z" fill="#c94848"/><path d="M11.6 10.600000000000001 L17.6 16.6 L11.6 22.6 L5.6 16.6z" fill="#fff" stroke="#c94848" stroke-width="1.5"/><path d="M11.6 14.3 L13.899999999999999 16.6 L11.6 18.900000000000002 L9.3 16.6z" fill="#c94848"/></svg><div class="abs" style="left:190.00px;top:438.14px;font-family:'Liberation Sans';font-size:20px;line-height:30px;font-weight:400;letter-spacing:-0.001px;color:#222;white-space:pre;">Schemas (1)</div>
<svg style="position:absolute;left:166.9px;top:483.1px" width="14" height="10" viewBox="0 0 14 10"><path d="M1.9 2 L7.1 7.6 L12.3 2" fill="none" stroke="#222" stroke-width="2.2"/></svg><svg style="position:absolute;left:193.4px;top:475.6px;overflow:visible" width="24" height="24" viewBox="0 0 24 24"><path d="M11.9 0.9000000000000004 L22.5 11.5 L11.9 22.1 L1.3000000000000007 11.5z" fill="#fdf0f0" stroke="#d04848" stroke-width="1.7"/><path d="M11.9 7.8 L15.600000000000001 11.5 L11.9 15.2 L8.2 11.5z" fill="#c94444"/></svg><div class="abs" style="left:220.20px;top:472.53px;font-family:'Liberation Sans';font-size:20px;line-height:30px;font-weight:400;letter-spacing:0.509px;color:#222;white-space:pre;">public</div>
<svg style="position:absolute;left:200.1px;top:515.4px" width="10" height="14" viewBox="0 0 10 14"><path d="M2 1.9 L7.6 7.1 L2 12.3" fill="none" stroke="#222" stroke-width="2.2"/></svg><svg style="position:absolute;left:224.6px;top:509.9px;overflow:visible" width="24" height="24" viewBox="0 0 24 24"><text x="-0.6" y="9.5" font-family="Liberation Sans" font-size="15.5" fill="#e5535b" textLength="10.6" lengthAdjust="spacingAndGlyphs">A</text><text x="-0.1" y="23" font-family="Liberation Sans" font-weight="bold" font-size="12.5" fill="#e5535b" textLength="10" lengthAdjust="spacingAndGlyphs">B</text><path d="M17.9 1.5 V21.5 M12.6 16.2 L17.9 21.8 L23.2 16.2" stroke="#e5535b" stroke-width="1.7" fill="none"/></svg><div class="abs" style="left:251.40px;top:506.92px;font-family:'Liberation Sans';font-size:20px;line-height:30px;font-weight:400;letter-spacing:0.275px;color:#222;white-space:pre;">Collations</div>
<svg style="position:absolute;left:200.1px;top:549.8px" width="10" height="14" viewBox="0 0 10 14"><path d="M2 1.9 L7.6 7.1 L2 12.3" fill="none" stroke="#222" stroke-width="2.2"/></svg><svg style="position:absolute;left:224.6px;top:544.3px;overflow:visible" width="24" height="24" viewBox="0 0 24 24"><path d="M2 8.7 V15.7 H13.4 V8.7" fill="#cfe3f6" stroke="#6b6b6b" stroke-width="1.4"/><rect x="5" y="10.5" width="4" height="5.2" fill="#8a6520"/><path d="M0.6 9 L8.4 1.9 L15.8 8.6" fill="none" stroke="#d9363e" stroke-width="1.7"/><path d="M9.4 13.7 V22.7 H22 V13.7 L15.8 8.3z" fill="#cfe3f6" stroke="#6b6b6b" stroke-width="1.4"/><rect x="13.6" y="16" width="4.4" height="6.7" fill="#8a6520"/><path d="M7.6 14.3 L16 7.2 L23.6 14.2" fill="none" stroke="#d9363e" stroke-width="1.8"/></svg><div class="abs" style="left:251.40px;top:541.30px;font-family:'Liberation Sans';font-size:20px;line-height:30px;font-weight:400;letter-spacing:0.214px;color:#222;white-space:pre;">Domains</div>
<svg style="position:absolute;left:200.1px;top:584.2px" width="10" height="14" viewBox="0 0 10 14"><path d="M2 1.9 L7.6 7.1 L2 12.3" fill="none" stroke="#222" stroke-width="2.2"/></svg><svg style="position:absolute;left:224.6px;top:578.7px;overflow:visible" width="24" height="24" viewBox="0 0 24 24"><path d="M4 -0.3 H11.5 L15.4 3.6 V19.5 Q15.4 22.3 13 22.3 H4 Q2.4 22.3 2.4 20.7 V1.3 Q2.4 -0.3 4 -0.3z" fill="#f4f4f4" stroke="#707070" stroke-width="1.4"/><path d="M9.4 4.3 H16.8 L22.4 9.9 V22.7 Q22.4 24.3 20.8 24.3 H9.4 Q7.8 24.3 7.8 22.7 V5.9 Q7.8 4.3 9.4 4.3z" fill="#f8f8f8" stroke="#707070" stroke-width="1.4"/><path d="M16.8 4.3 V9.9 H22.4" fill="none" stroke="#707070" stroke-width="1.2"/><circle cx="14.9" cy="17.3" r="2.6" fill="none" stroke="#707070" stroke-width="1.5" stroke-dasharray="1.4 0.7"/><circle cx="14.9" cy="17.3" r="1" fill="#707070"/></svg><div class="abs" style="left:251.40px;top:575.69px;font-family:'Liberation Sans';font-size:20px;line-height:30px;font-weight:400;letter-spacing:0.030px;color:#222;white-space:pre;">FTS Configurations</div>
<svg style="position:absolute;left:200.1px;top:618.6px" width="10" height="14" viewBox="0 0 10 14"><path d="M2 1.9 L7.6 7.1 L2 12.3" fill="none" stroke="#222" stroke-width="2.2"/></svg><svg style="position:absolute;left:224.6px;top:613.1px;overflow:visible" width="24" height="24" viewBox="0 0 24 24"><rect x="2.1" y="1.2" width="6.8" height="21.4" rx="0.8" fill="#dcefff" stroke="#34495e" stroke-width="1.5"/><path d="M2.1 4.8 H8.9 M2.1 18.6 H8.9" stroke="#34495e" stroke-width="1.1"/><path d="M9.8 6.2 L14.7 3.9 L22.8 20.6 L17.9 22.9z" fill="#dcefff" stroke="#3d8fd0" stroke-width="1.5"/><path d="M11.3 9.3 L16.2 7 M16.4 19.5 L21.3 17.2" stroke="#3d8fd0" stroke-width="1.1"/></svg><div class="abs" style="left:251.40px;top:610.07px;font-family:'Liberation Sans';font-size:20px;line-height:30px;font-weight:400;letter-spacing:-0.001px;color:#222;white-space:pre;">FTS Dictionaries</div>
<svg style="position:absolute;left:200.1px;top:653.0px" width="10" height="14" viewBox="0 0 10 14"><path d="M2 1.9 L7.6 7.1 L2 12.3" fill="none" stroke="#222" stroke-width="2.2"/></svg><svg style="position:absolute;left:224.6px;top:647.5px;overflow:visible" width="24" height="24" viewBox="0 0 24 24"><text x="0" y="17.5" font-family="Liberation Sans" font-weight="bold" font-size="15.5" fill="#5c9e00" textLength="22.4" lengthAdjust="spacingAndGlyphs">Aa</text></svg><div class="abs" style="left:251.40px;top:644.46px;font-family:'Liberation Sans';font-size:20px;line-height:30px;font-weight:400;letter-spacing:-0.274px;color:#222;white-space:pre;">FTS Parsers</div>
<svg style="position:absolute;left:200.1px;top:687.4px" width="10" height="14" viewBox="0 0 10 14"><path d="M2 1.9 L7.6 7.1 L2 12.3" fill="none" stroke="#222" stroke-width="2.2"/></svg><svg style="position:absolute;left:224.6px;top:681.9px;overflow:visible" width="24" height="24" viewBox="0 0 24 24"><rect x="2.1" y="1.8" width="15.6" height="16.6" rx="2.2" fill="#fffbd5" stroke="#d6c84a" stroke-width="1.5"/><rect x="5.6" y="4.8" width="16.1" height="17.1" rx="2.2" fill="#fffbd5" stroke="#d6c84a" stroke-width="1.5"/><circle cx="13" cy="12.4" r="3.1" fill="none" stroke="#b9a830" stroke-width="1.4"/><path d="M15.2 14.6 L18 17.4" stroke="#b9a830" stroke-width="1.6"/></svg><div class="abs" style="left:251.40px;top:678.85px;font-family:'Liberation Sans';font-size:20px;line-height:30px;font-weight:400;letter-spacing:0.051px;color:#222;white-space:pre;">FTS Templates</div>
<svg style="position:absolute;left:200.1px;top:721.8px" width="10" height="14" viewBox="0 0 10 14"><path d="M2 1.9 L7.6 7.1 L2 12.3" fill="none" stroke="#222" stroke-width="2.2"/></svg><svg style="position:absolute;left:224.6px;top:716.3px;overflow:visible" width="24" height="24" viewBox="0 0 24 24"><rect x="2.1" y="2.4" width="13.3" height="14.3" rx="1.5" fill="#f7f7f7" stroke="#3c98e8" stroke-width="1.5"/><rect x="6.4" y="6.4" width="13.3" height="14.6" rx="1.5" fill="#f1efec" stroke="#3c98e8" stroke-width="1.5"/><path d="M6.4 13 H19.7 M13 6.4 V13" stroke="#3c98e8" stroke-width="1.3"/><path d="M13 13 V21 M7 17 H19" stroke="#cdd1d8" stroke-width="1.2"/><path d="M16 8.2 L22.6 2.4 M18.6 1.7 H23.3 V6.3" stroke="#3c98e8" stroke-width="1.5" fill="none"/></svg><div class="abs" style="left:251.40px;top:713.23px;font-family:'Liberation Sans';font-size:20px;line-height:30px;font-weight:400;letter-spacing:0.048px;color:#222;white-space:pre;">Foreign Tables</div>
<svg style="position:absolute;left:200.1px;top:756.1px" width="10" height="14" viewBox="0 0 10 14"><path d="M2 1.9 L7.6 7.1 L2 12.3" fill="none" stroke="#222" stroke-width="2.2"/></svg><svg style="position:absolute;left:224.6px;top:750.6px;overflow:visible" width="24" height="24" viewBox="0 0 24 24"><path d="M7.5 4.5 Q12 2.2 16.5 4.5 Q19 8 16.5 19.5 Q12 21.8 7.5 19.5 Q5 16 7.5 4.5z" fill="#e9f8f8"/><path d="M5.2 1.5 Q3.2 1.5 3.2 3.8 V9.6 Q3.2 11.8 0.6 12 Q3.2 12.3 3.2 14.5 V20.3 Q3.2 22.6 5.2 22.6" fill="none" stroke="#2e8b9a" stroke-width="1.6"/><path d="M18.8 1.5 Q20.8 1.5 20.8 3.8 V9.6 Q20.8 11.8 23.4 12 Q20.8 12.3 20.8 14.5 V20.3 Q20.8 22.6 18.8 22.6" fill="none" stroke="#2e8b9a" stroke-width="1.6"/><path d="M8.5 4.6 Q12 3 15.5 4.6 M8.5 19.4 Q12 21 15.5 19.4" fill="none" stroke="#2e8b9a" stroke-width="1.3"/><path d="M8.6 9 H15.4 M8.6 12.2 H15.4 M8.6 15.4 H13.2" stroke="#2e8b9a" stroke-width="1.6"/></svg><div class="abs" style="left:251.40px;top:747.62px;font-family:'Liberation Sans';font-size:20px;line-height:30px;font-weight:400;letter-spacing:0.236px;color:#222;white-space:pre;">Functions</div>
<svg style="position:absolute;left:200.1px;top:790.5px" width="10" height="14" viewBox="0 0 10 14"><path d="M2 1.9 L7.6 7.1 L2 12.3" fill="none" stroke="#222" stroke-width="2.2"/></svg><svg style="position:absolute;left:224.6px;top:785.0px;overflow:visible" width="24" height="24" viewBox="0 0 24 24"><g fill="#b9e26a" stroke="#86c232" stroke-width="1.6"><rect x="1.2" y="1.2" width="16" height="15.5" rx="1"/><rect x="4.4" y="4.4" width="17.6" height="17.4" rx="1"/></g><rect x="7.6" y="7.6" width="11.4" height="11.2" fill="#d9f2a8" stroke="#86c232" stroke-width="1.6"/><rect x="10.6" y="10.6" width="5.4" height="5.2" fill="none" stroke="#86c232" stroke-width="1.6"/><path d="M17.5 19 L23.5 23" stroke="#86c232" stroke-width="1.6"/></svg><div class="abs" style="left:251.40px;top:782.00px;font-family:'Liberation Sans';font-size:20px;line-height:30px;font-weight:400;letter-spacing:0.249px;color:#222;white-space:pre;">Materialized Views</div>
<svg style="position:absolute;left:200.1px;top:824.9px" width="10" height="14" viewBox="0 0 10 14"><path d="M2 1.9 L7.6 7.1 L2 12.3" fill="none" stroke="#222" stroke-width="2.2"/></svg><svg style="position:absolute;left:224.6px;top:819.4px;overflow:visible" width="24" height="24" viewBox="0 0 24 24"><path d="M9 4.5 Q13.5 2.2 18 4.5 Q20.5 8 18 19.5 Q13.5 21.8 9 19.5 Q6.5 16 9 4.5z" fill="#e9f8f8"/><path d="M4.5 1.3 Q2.6 1.5 2.6 3.6 V9.4 Q2.6 11.6 0 12 Q2.6 12.4 2.6 14.6 V20.4 Q2.6 22.5 4.5 22.6" fill="none" stroke="#2e8b9a" stroke-width="1.5"/><path d="M10 3 Q8.2 3 8.2 5.2 V10.2 Q8.2 11.8 6 12 Q8.2 12.3 8.2 13.9 V19.8 Q8.2 22 10 22.4" fill="none" stroke="#2e8b9a" stroke-width="1.5"/><path d="M19.6 1.5 Q21.5 1.5 21.5 3.6 V9.4 Q21.5 11.6 24 12 Q21.5 12.4 21.5 14.6 V20.4 Q21.5 22.5 19.6 22.6" fill="none" stroke="#2e8b9a" stroke-width="1.5"/><path d="M11 3.2 Q14 1.6 17.5 3.5" fill="none" stroke="#2e8b9a" stroke-width="1.1" stroke-dasharray="1.5 1.2"/></svg><div class="abs" style="left:251.40px;top:816.39px;font-family:'Liberation Sans';font-size:20px;line-height:30px;font-weight:400;letter-spacing:0.092px;color:#222;white-space:pre;">Procedures</div>
<svg style="position:absolute;left:200.1px;top:859.3px" width="10" height="14" viewBox="0 0 10 14"><path d="M2 1.9 L7.6 7.1 L2 12.3" fill="none" stroke="#222" stroke-width="2.2"/></svg><svg style="position:absolute;left:224.6px;top:853.8px;overflow:visible" width="24" height="24" viewBox="0 0 24 24"><defs><linearGradient id="sqg" x1="0" x2="1"><stop offset="0" stop-color="#5b3fc8"/><stop offset="1" stop-color="#9a3fd3"/></linearGradient></defs><text x="0.3" y="17.1" font-family="Liberation Sans" font-weight="bold" font-size="16.5" fill="url(#sqg)" textLength="23.5" lengthAdjust="spacingAndGlyphs">1..3</text></svg><div class="abs" style="left:252.40px;top:850.78px;font-family:'Liberation Sans';font-size:20px;line-height:30px;font-weight:400;letter-spacing:-0.235px;color:#222;white-space:pre;">Sequences</div>
<div style="position:absolute;left:0;top:882.7px;width:487.4px;height:34.3px;background:#d7edfa"></div><div style="position:absolute;left:488.3px;top:882.7px;width:4.6px;height:34.3px;background:#2c5d88"></div><svg style="position:absolute;left:198.1px;top:895.7px" width="14" height="10" viewBox="0 0 14 10"><path d="M1.9 2 L7.1 7.6 L12.3 2" fill="none" stroke="#222" stroke-width="2.2"/></svg><svg style="position:absolute;left:224.6px;top:888.2px;overflow:visible" width="24" height="24" viewBox="0 0 24 24"><rect x="1.2" y="1.3" width="16.3" height="15.4" rx="2" fill="#f7f7f7" stroke="#3c98e8" stroke-width="1.7"/><rect x="4.8" y="5.4" width="18.2" height="16.9" rx="2" fill="#f3f1ee" stroke="#3c98e8" stroke-width="1.7"/><path d="M4.8 10.8 H23" stroke="#3c98e8" stroke-width="1.4"/><path d="M13.9 5.4 V10.8" stroke="#3c98e8" stroke-width="1.4"/><path d="M13.9 10.8 V22.3" stroke="#cdd1d8" stroke-width="1.3"/><path d="M5.6 16.5 H22.2" stroke="#d3d6dc" stroke-width="1.3"/></svg><div class="abs" style="left:252.40px;top:885.16px;font-family:'Liberation Sans';font-size:20px;line-height:30px;font-weight:400;letter-spacing:0.150px;color:#222;white-space:pre;">Tables (4)</div>
<svg style="position:absolute;left:231.3px;top:928.1px" width="10" height="14" viewBox="0 0 10 14"><path d="M2 1.9 L7.6 7.1 L2 12.3" fill="none" stroke="#222" stroke-width="2.2"/></svg><svg style="position:absolute;left:255.8px;top:922.6px;overflow:visible" width="24" height="24" viewBox="0 0 24 24"><rect x="2" y="3.4" width="19.6" height="16.5" rx="2" fill="#f3f1ee" stroke="#3c98e8" stroke-width="1.8"/><path d="M2 8.9 H21.6" stroke="#3c98e8" stroke-width="1.5"/><path d="M11.8 3.4 V8.9" stroke="#3c98e8" stroke-width="1.5"/><path d="M11.8 8.9 V19.9" stroke="#cdd1d8" stroke-width="1.4"/><path d="M2.8 14.4 H20.8" stroke="#d3d6dc" stroke-width="1.4"/></svg><div class="abs" style="left:283.60px;top:919.55px;font-family:'Liberation Sans';font-size:20px;line-height:30px;font-weight:400;letter-spacing:-0.042px;color:#222;white-space:pre;">employee</div>
<svg style="position:absolute;left:231.3px;top:962.5px" width="10" height="14" viewBox="0 0 10 14"><path d="M2 1.9 L7.6 7.1 L2 12.3" fill="none" stroke="#222" stroke-width="2.2"/></svg><svg style="position:absolute;left:255.8px;top:957.0px;overflow:visible" width="24" height="24" viewBox="0 0 24 24"><rect x="2" y="3.4" width="19.6" height="16.5" rx="2" fill="#f3f1ee" stroke="#3c98e8" stroke-width="1.8"/><path d="M2 8.9 H21.6" stroke="#3c98e8" stroke-width="1.5"/><path d="M11.8 3.4 V8.9" stroke="#3c98e8" stroke-width="1.5"/><path d="M11.8 8.9 V19.9" stroke="#cdd1d8" stroke-width="1.4"/><path d="M2.8 14.4 H20.8" stroke="#d3d6dc" stroke-width="1.4"/></svg><div class="abs" style="left:283.60px;top:953.93px;font-family:'Liberation Sans';font-size:20px;line-height:30px;font-weight:400;letter-spacing:-0.015px;color:#222;white-space:pre;">employees</div>
<svg style="position:absolute;left:231.3px;top:996.9px" width="10" height="14" viewBox="0 0 10 14"><path d="M2 1.9 L7.6 7.1 L2 12.3" fill="none" stroke="#222" stroke-width="2.2"/></svg><svg style="position:absolute;left:255.8px;top:991.4px;overflow:visible" width="24" height="24" viewBox="0 0 24 24"><rect x="2" y="3.4" width="19.6" height="16.5" rx="2" fill="#f3f1ee" stroke="#3c98e8" stroke-width="1.8"/><path d="M2 8.9 H21.6" stroke="#3c98e8" stroke-width="1.5"/><path d="M11.8 3.4 V8.9" stroke="#3c98e8" stroke-width="1.5"/><path d="M11.8 8.9 V19.9" stroke="#cdd1d8" stroke-width="1.4"/><path d="M2.8 14.4 H20.8" stroke="#d3d6dc" stroke-width="1.4"/></svg><div class="abs" style="left:282.60px;top:988.32px;font-family:'Liberation Sans';font-size:20px;line-height:30px;font-weight:400;letter-spacing:0.144px;color:#222;white-space:pre;">replica_test</div>
<svg style="position:absolute;left:231.3px;top:1031.2px" width="10" height="14" viewBox="0 0 10 14"><path d="M2 1.9 L7.6 7.1 L2 12.3" fill="none" stroke="#222" stroke-width="2.2"/></svg><svg style="position:absolute;left:255.8px;top:1025.7px;overflow:visible" width="24" height="24" viewBox="0 0 24 24"><rect x="2" y="3.4" width="19.6" height="16.5" rx="2" fill="#f3f1ee" stroke="#3c98e8" stroke-width="1.8"/><path d="M2 8.9 H21.6" stroke="#3c98e8" stroke-width="1.5"/><path d="M11.8 3.4 V8.9" stroke="#3c98e8" stroke-width="1.5"/><path d="M11.8 8.9 V19.9" stroke="#cdd1d8" stroke-width="1.4"/><path d="M2.8 14.4 H20.8" stroke="#d3d6dc" stroke-width="1.4"/></svg><div class="abs" style="left:282.60px;top:1022.71px;font-family:'Liberation Sans';font-size:20px;line-height:30px;font-weight:400;letter-spacing:0.256px;color:#222;white-space:pre;">replication_test</div>
<svg style="position:absolute;left:200.1px;top:1065.6px" width="10" height="14" viewBox="0 0 10 14"><path d="M2 1.9 L7.6 7.1 L2 12.3" fill="none" stroke="#222" stroke-width="2.2"/></svg><svg style="position:absolute;left:224.6px;top:1060.1px;overflow:visible" width="24" height="24" viewBox="0 0 24 24"><path d="M7.5 4.5 Q12 2.2 16.5 4.5 Q19 8 16.5 19.5 Q12 21.8 7.5 19.5 Q5 16 7.5 4.5z" fill="#e9f8f8"/><path d="M5.2 1.5 Q3.2 1.5 3.2 3.8 V9.6 Q3.2 11.8 0.6 12 Q3.2 12.3 3.2 14.5 V20.3 Q3.2 22.6 5.2 22.6" fill="none" stroke="#2e8b9a" stroke-width="1.6"/><path d="M18.8 1.5 Q20.8 1.5 20.8 3.8 V9.6 Q20.8 11.8 23.4 12 Q20.8 12.3 20.8 14.5" fill="none" stroke="#2e8b9a" stroke-width="1.6"/><path d="M8.6 8.5 H15.4 M8.6 11.7 H15.4 M8.6 14.9 H13.2" stroke="#2e8b9a" stroke-width="1.6"/><path d="M13 20.6 H21 M19 17.4 L23.2 20.6 L19 23.8z" fill="#2e8b9a" stroke="#2e8b9a" stroke-width="1.6" stroke-linejoin="round"/></svg><div class="abs" style="left:252.40px;top:1057.09px;font-family:'Liberation Sans';font-size:20px;line-height:30px;font-weight:400;letter-spacing:0.108px;color:#222;white-space:pre;">Trigger Functions</div>
<svg style="position:absolute;left:200.1px;top:1100.0px" width="10" height="14" viewBox="0 0 10 14"><path d="M2 1.9 L7.6 7.1 L2 12.3" fill="none" stroke="#222" stroke-width="2.2"/></svg><svg style="position:absolute;left:224.6px;top:1094.5px;overflow:visible" width="24" height="24" viewBox="0 0 24 24"><rect x="1.5" y="1.5" width="15" height="15" rx="2" fill="#d7f5e3" stroke="#4cc38a" stroke-width="1.5"/><rect x="5.5" y="6" width="17" height="16" rx="2" fill="#d7f5e3" stroke="#4cc38a" stroke-width="1.5"/></svg><div class="abs" style="left:252.40px;top:1091.48px;font-family:'Liberation Sans';font-size:20px;line-height:30px;font-weight:400;letter-spacing:-0.190px;color:#222;white-space:pre;">Types</div>
</div>
</div>
<div class="abs" style="left:493px;top:135px;width:25px;height:988px;background:#f1f2f5"></div>
<div class="abs" style="left:499px;top:278px;width:12.5px;height:734px;background:#cbd0da;border-radius:6px"></div>
<div class="abs" style="left:518px;top:85px;width:2px;height:1038px;background:#dfe1e6"></div>
<!-- bottom strip -->
<div class="abs" style="left:0;top:1122.5px;width:612px;height:3px;background:#c3c3c3"></div>
<div class="abs" style="left:612px;top:1122.5px;width:1388px;height:3px;background:#262626"></div>
<div class="abs" style="left:1318px;top:1122.5px;width:76px;height:3px;background:#5a5a5a"></div>
</body></html>
